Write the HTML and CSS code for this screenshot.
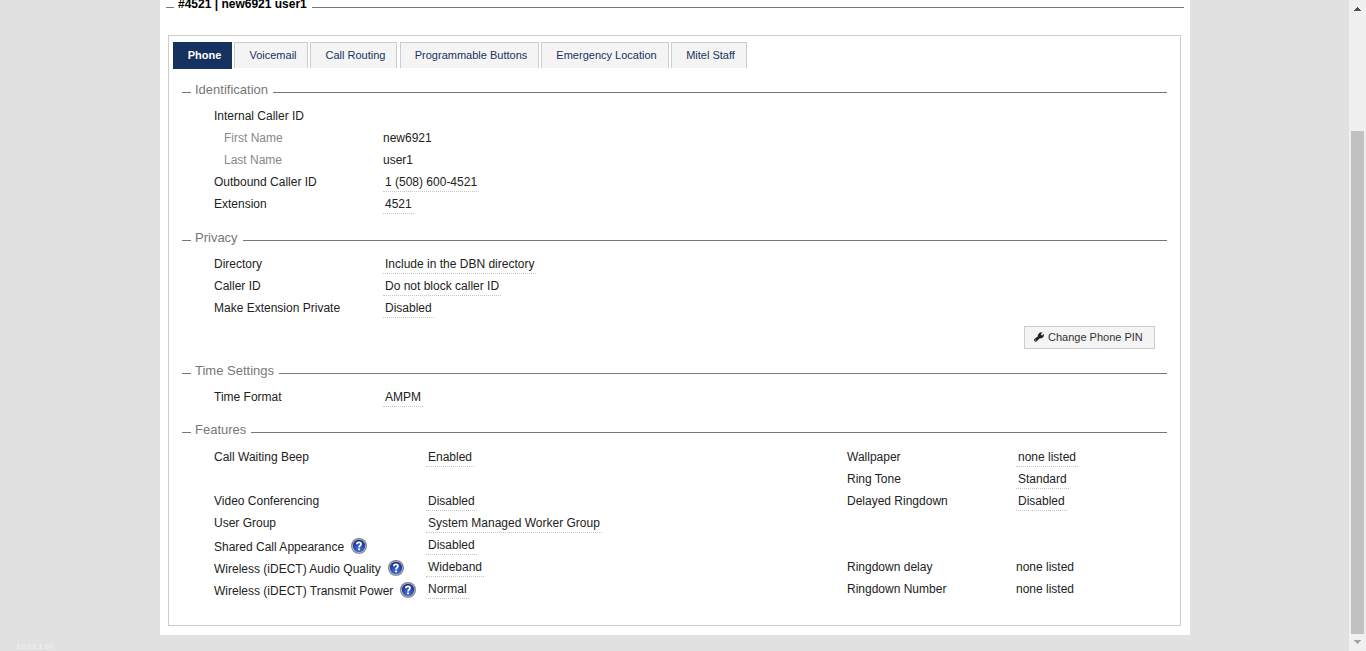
FILE: index.html
```html
<!DOCTYPE html>
<html lang="en">
<head>
<meta charset="utf-8">
<title>#4521 | new6921 user1</title>
<link rel="stylesheet" href="styles.css">
</head>
<body>
<svg class="defs" width="0" height="0" aria-hidden="true">
  <defs>
    <linearGradient id="ring" x1="0" y1="0" x2="0" y2="1"><stop offset="0" stop-color="#777b84"/><stop offset="1" stop-color="#8b8f97"/></linearGradient>
    <radialGradient id="ball" cx=".5" cy=".8" r=".75"><stop offset="0" stop-color="#4a72d6"/><stop offset="1" stop-color="#182f94"/></radialGradient>
    <symbol id="help" viewBox="0 0 16 16">
      <circle cx="8" cy="8" r="8" fill="url(#ring)"/>
      <circle cx="8" cy="8" r="6.8" fill="#c9ccd4"/>
      <circle cx="8" cy="8" r="6.2" fill="url(#ball)"/>
      <path d="M5.8 6.3C5.9 3.6 10.2 3.7 10.1 6.1C10.1 7.5 8 7.6 8 9.4" fill="none" stroke="#fff" stroke-width="1.7"/>
      <rect x="7.1" y="10.5" width="1.8" height="1.7" fill="#fff"/>
    </symbol>
  </defs>
</svg>
<div class="page">
  <aside class="side"><span class="version">19.03.1.67</span></aside>
  <main class="sheet">
    <h1 class="rule rule-main"><span>#4521 | new6921 user1</span></h1>
    <div class="panel">
      <nav class="tabs">
        <a class="tab active">Phone</a>
        <a class="tab voicemail">Voicemail</a>
        <a class="tab routing">Call Routing</a>
        <a class="tab buttons">Programmable Buttons</a>
        <a class="tab location">Emergency Location</a>
        <a class="tab staff">Mitel Staff</a>
      </nav>
      <section class="section identification">
        <h2 class="rule"><span>Identification</span></h2>
        <div class="row"><span>Internal Caller ID</span></div>
        <div class="row"><span class="sub">First Name</span><span>new6921</span></div>
        <div class="row"><span class="sub">Last Name</span><span>user1</span></div>
        <div class="row"><span>Outbound Caller ID</span><span class="edit">1 (508) 600-4521</span></div>
        <div class="row"><span>Extension</span><span class="edit">4521</span></div>
      </section>
      <section class="section privacy">
        <h2 class="rule"><span>Privacy</span></h2>
        <div class="row"><span>Directory</span><span class="edit">Include in the DBN directory</span></div>
        <div class="row"><span>Caller ID</span><span class="edit">Do not block caller ID</span></div>
        <div class="row"><span>Make Extension Private</span><span class="edit">Disabled</span></div>
        <div class="actions">
          <button class="pin" type="button"><svg width="10" height="10" viewBox="0 0 10 10"><path d="M.5 7L4 4.5C3.7 2.2 5.7.2 8 .6L6.8 2.1L7.2 3.2L8.4 3.4L9.9 2.2C10.2 4.8 8 6.4 5.9 6.1L2.8 9.1C1.2 10.4-.7 8.6.5 7Z" fill="#222" stroke="#222" stroke-width=".4"/><circle cx="1.8" cy="8" r=".5" fill="#f4f4f4"/></svg><span>Change Phone PIN</span></button>
        </div>
      </section>
      <section class="section time">
        <h2 class="rule"><span>Time Settings</span></h2>
        <div class="row"><span>Time Format</span><span class="edit">AMPM</span></div>
      </section>
      <section class="section features">
        <h2 class="rule"><span>Features</span></h2>
        <div class="row"><span>Call Waiting Beep</span><span class="edit">Enabled</span><span>Wallpaper</span><span class="edit">none listed</span></div>
        <div class="row"><span></span><span></span><span>Ring Tone</span><span class="edit">Standard</span></div>
        <div class="row"><span>Video Conferencing</span><span class="edit">Disabled</span><span>Delayed Ringdown</span><span class="edit">Disabled</span></div>
        <div class="row"><span>User Group</span><span class="edit">System Managed Worker Group</span></div>
        <div class="row"><span class="helped">Shared Call Appearance<svg width="16" height="16"><use href="#help"/></svg></span><span class="edit">Disabled</span></div>
        <div class="row"><span class="helped">Wireless (iDECT) Audio Quality<svg width="16" height="16"><use href="#help"/></svg></span><span class="edit">Wideband</span><span>Ringdown delay</span><span>none listed</span></div>
        <div class="row"><span class="helped">Wireless (iDECT) Transmit Power<svg width="16" height="16"><use href="#help"/></svg></span><span class="edit">Normal</span><span>Ringdown Number</span><span>none listed</span></div>
      </section>
    </div>
  </main>
  <div class="scrollbar">
    <svg width="7" height="4" viewBox="0 0 7 4" shape-rendering="crispEdges"><path d="M3 0h1v1h1v1h1v1h1v1H0V3h1V2h1V1h1z" fill="#505050"/></svg>
    <div class="thumb"></div>
    <svg width="7" height="4" viewBox="0 0 7 4" shape-rendering="crispEdges"><path d="M0 0h7v1H6v1H5v1H4v1H3V3H2V2H1V1H0z" fill="#a3a3a3"/></svg>
  </div>
</div>
</body>
</html>
```
FILE: styles.css
```css
* { box-sizing: border-box; }
body {
  margin: 0;
  overflow: hidden;
  background: #e1e1e1;
  color: #222;
  font: 12px "Liberation Sans", Arial, sans-serif;
}
.defs { display: block; }
.page { display: flex; height: 651px; }
.side {
  display: flex;
  align-items: flex-end;
  width: 160px;
  padding: 0 0 0 16px;
}
.version { color: #f2f2f2; font-size: 8px; line-height: 9px; }
.sheet {
  width: 1030px;
  height: 635px;
  margin-right: auto;
  padding: 0 6px;
  background: #fff;
}
.rule {
  display: flex;
  align-items: center;
  gap: 4px;
  height: 24px;
  margin: 0;
  padding-bottom: 2px;
  color: #777;
  font-size: 13px;
  font-weight: normal;
  line-height: 18px;
}
.rule::before, .rule::after { content: ""; height: 1px; background: #777; }
.rule::before { width: 9px; }
.rule::after { flex: 1; }
.rule > span { margin: -5px 1px 0 0; }
.rule-main {
  height: 24px;
  margin: -5px 0 16px;
  padding-bottom: 0;
  color: #000;
  font-size: 12px;
  font-weight: bold;
}
.rule-main::before { width: 8px; }
.rule-main > span { margin-top: -7px; }
.panel {
  height: 591px;
  margin: 0 3px 0 2px;
  padding: 6px 13px 0;
  border: 1px solid #ccc;
}
.tabs { display: flex; align-items: flex-start; gap: 2px; height: 39px; margin-left: -9px; }
.tab {
  height: 26px;
  border: 1px solid #ccc;
  border-bottom: 0;
  background: #f4f4f4;
  color: #16325f;
  font-size: 11px;
  line-height: 25px;
  text-align: center;
}
.tab.active {
  width: 59px;
  height: 27px;
  padding-left: 4px;
  border-color: #16325f;
  background: #16325f;
  color: #fff;
  font-weight: bold;
}
.voicemail { width: 74px; padding-left: 4px; }
.routing { width: 87px; padding-left: 4px; }
.buttons { width: 139px; margin-left: 1px; padding-left: 3px; }
.location { width: 128px; padding-left: 3px; }
.staff { width: 76px; padding-left: 3px; }
.identification { height: 148px; }
.privacy { height: 133px; }
.time { height: 59px; }
.features .rule { margin-bottom: 1px; }
.row {
  display: grid;
  grid-template-columns: 169px auto;
  justify-content: start;
  justify-items: start;
  height: 22px;
  padding-left: 32px;
  line-height: 22px;
  white-space: nowrap;
}
.features .row { grid-template-columns: 212px 421px 169px auto; }
.sub { padding-left: 10px; color: #888; }
.edit { height: 21px; padding: 0 2px; border-bottom: 1px dotted #c4c4c4; }
.helped { display: flex; align-items: center; gap: 7px; height: 22px; margin-top: 1px; line-height: 24px; }
.helped svg { margin-top: -2px; }
.helped { height: 24px; }
.actions { display: flex; justify-content: flex-end; padding: 7px 12px 0 0; }
.pin {
  display: flex;
  align-items: center;
  gap: 4px;
  width: 131px;
  height: 23px;
  padding: 0 9px;
  border: 1px solid #ccc;
  background: #f4f4f4;
  color: #333;
  font: 11px "Liberation Sans", Arial, sans-serif;
  white-space: nowrap;
}
.pin span { margin-top: -2px; }
.pin svg { margin-top: -1px; }
.scrollbar {
  display: flex;
  flex-direction: column;
  align-items: center;
  width: 17px;
  padding-top: 7px;
  background: #f0f0f0;
}
.thumb { width: 13px; height: 503px; margin: 120px 0 6px; background: #c1c1c1; }
```
